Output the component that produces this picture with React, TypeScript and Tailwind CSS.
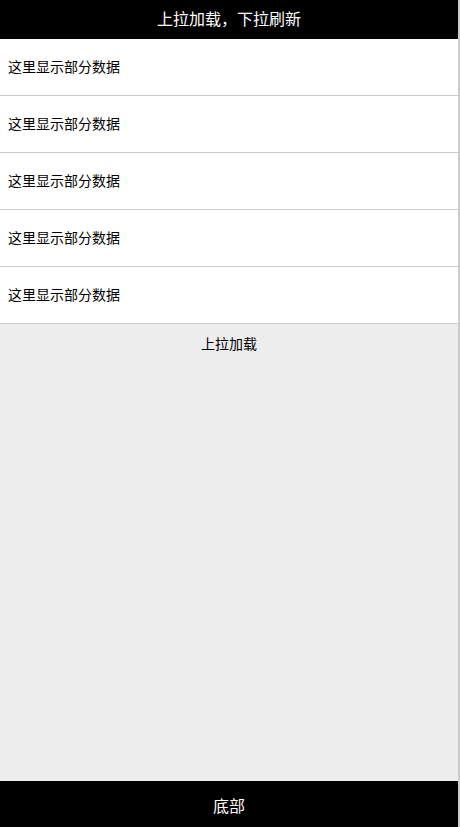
/** Pull-to-refresh list page. */

const rows = Array.from({ length: 5 }, () => '这里显示部分数据');

export default function App() {
  return (
    <div
      className="flex h-[827px] w-[460px] bg-white"
      style={{ fontFamily: '"Noto Sans CJK SC", "Noto Sans", sans-serif' }}
    >
      <div className="flex w-[458px] flex-col">
        <header className="flex h-[39px] shrink-0 items-center justify-center bg-black pb-[3px] text-[16px] text-white">
          上拉加载，下拉刷新
        </header>
        <ul className="bg-white">
          {rows.map((text, i) => (
            <li
              key={i}
              className="flex h-[57px] items-center border-b border-[#cccccc] pb-[2px] pl-2 text-[14px] text-black"
            >
              {text}
            </li>
          ))}
        </ul>
        <div className="flex-1 bg-[#ededed]">
          <p className="pt-[8px] text-center text-[14px] leading-[22px] text-black">上拉加载</p>
        </div>
        <footer className="flex h-[46px] shrink-0 items-center justify-center bg-black pt-[1px] text-[16px] text-white">
          底部
        </footer>
      </div>
      <div className="w-[2px] bg-[#cccccc]" />
    </div>
  );
}
